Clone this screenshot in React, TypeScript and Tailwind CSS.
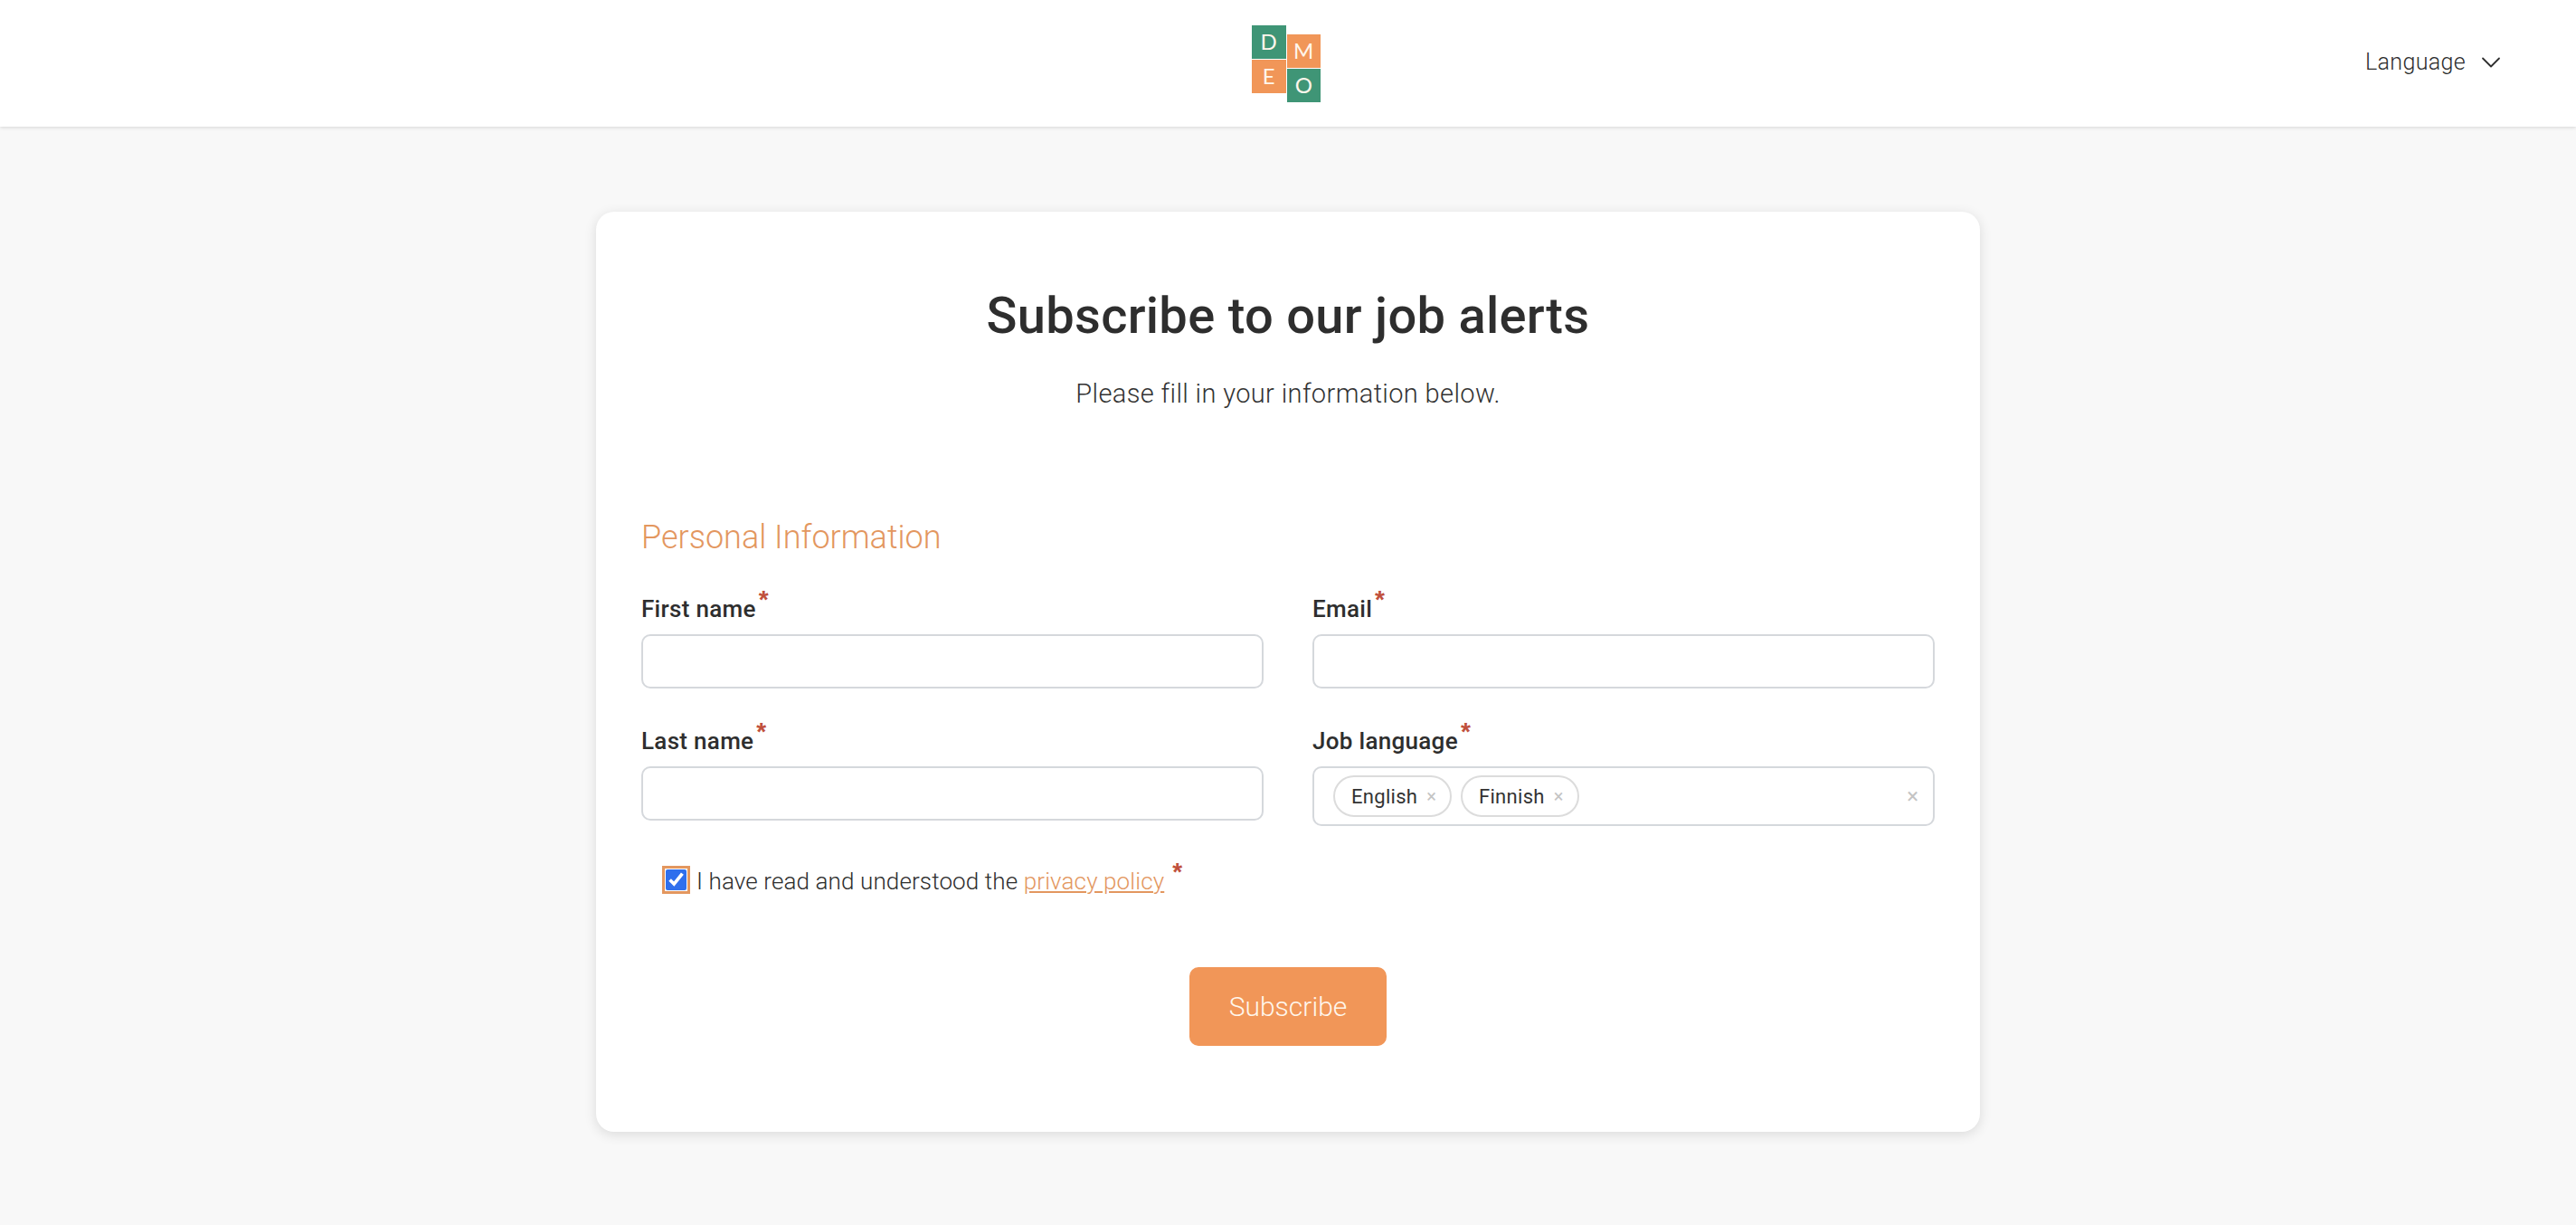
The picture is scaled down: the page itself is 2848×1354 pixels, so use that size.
import React from "react";
import { ChevronDown } from "lucide-react";

const FONT = "font-['Roboto',sans-serif]";

function Req({ className = "" }: { className?: string }) {
  return (
    <span className={`font-['Liberation_Sans',sans-serif] text-[#c0503c] text-[28px] leading-none font-bold relative ${className}`}>*</span>
  );
}

function Field({ label, children }: { label: string; children?: React.ReactNode }) {
  return (
    <div className="flex flex-col">
      <label className="h-[54px] pt-[7px] text-[26px] leading-[38px] font-medium text-[#2e2e2e] tracking-[0.3px] flex items-start">
        <span>{label}</span>
        <Req className="ml-[3px] -top-[5px]" />
      </label>
      {children ?? (
        <input
          type="text"
          className="h-[60px] w-full rounded-[10px] border-2 border-[#d5d8dc] bg-white px-4 outline-none"
        />
      )}
    </div>
  );
}

function Chip({ label }: { label: string }) {
  return (
    <span className="h-[46px] w-[131px] rounded-full border-2 border-[#dcdcdc] flex items-center pl-[18px] gap-[10px] text-[22px] text-[#333] tracking-[0.3px]">
      <span>{label}</span>
      <span className="text-[#c4c4c4] text-[20px] leading-none">×</span>
    </span>
  );
}

function Logo() {
  const tile = "w-[37.5px] h-[37px] flex items-center justify-center text-[#fff6ec] text-[24px] font-normal font-['Lato',sans-serif]";
  return (
    <div className="flex gap-px mr-[4px]">
      <div className="flex flex-col gap-px">
        <div className={`${tile} bg-[#3f9576]`}>D</div>
        <div className={`${tile} bg-[#f19658]`}>E</div>
      </div>
      <div className="flex flex-col gap-px mt-[10px]">
        <div className={`${tile} bg-[#f19658]`}>M</div>
        <div className={`${tile} bg-[#3f9576]`}>O</div>
      </div>
    </div>
  );
}

export default function App() {
  return (
    <div className={`min-h-[1354px] bg-[#f8f8f8] ${FONT}`}>
      <header className="relative h-[140px] bg-white shadow-[0_1px_4px_rgba(0,0,0,0.14)] flex items-center justify-center">
        <Logo />
        <div className="absolute right-[76px] top-[49px] flex items-center gap-[10px] text-[#2e2e2e] text-[25px] leading-[40px] font-light tracking-[0.35px]">
          <span>Language</span>
          <ChevronDown className="w-[36px] h-[36px]" strokeWidth={1.2} />
        </div>
      </header>

      <main className="flex justify-center pt-[94px]">
        <section className="w-[1530px] h-[1017px] bg-white rounded-[20px] shadow-[0_3px_14px_rgba(0,0,0,0.12)] px-[50px]">
          <h1 className="mt-[85px] text-center text-[56px] leading-[60px] font-medium text-[#2e2e2e] tracking-[0.3px]">
            Subscribe to our job alerts
          </h1>
          <p className="mt-[36px] text-center text-[29px] leading-[40px] font-light text-[#333] tracking-[0.37px]">
            Please fill in your information below.
          </p>
          <h2 className="mt-[116px] text-[36px] leading-[46px] font-light text-[#e3975f] tracking-[0px]">
            Personal Information
          </h2>
          <div className="mt-[30px] grid grid-cols-2 gap-x-[54px] gap-y-[32px]">
            <Field label="First name" />
            <Field label="Email" />
            <Field label="Last name" />
            <Field label="Job language">
              <div className="h-[66px] rounded-[10px] border-2 border-[#d5d8dc] flex items-center pl-[21px] pr-[16px] gap-[10px]">
                <Chip label="English" />
                <Chip label="Finnish" />
                <span className="ml-auto text-[#c4c4c4] text-[24px] leading-none">×</span>
              </div>
            </Field>
          </div>
          <div className="mt-[44px] ml-[27px] flex items-center h-[30px]">
            <input
              type="checkbox"
              defaultChecked
              className="w-[23px] h-[23px] m-0 accent-[#2f6fed] outline-[3px] outline-solid outline-[#e3975f] outline-offset-[1px]"
            />
            <span className="ml-[11px] relative top-[2px] text-[26px] leading-[38px] font-light text-[#2e2e2e] tracking-[0.12px]">
              I have read and understood the{" "}
              <a href="#" className="text-[#e3975f] underline">privacy policy</a>
            </span>
            <Req className="ml-[9px] -top-[8px]" />
          </div>
          <div className="mt-[82px] flex justify-center">
            <button type="button" className="w-[218px] h-[87px] rounded-[10px] bg-[#f19658] text-[#fff6ec] text-[30px] font-light tracking-[0px]">
              Subscribe
            </button>
          </div>
        </section>
      </main>
    </div>
  );
}
